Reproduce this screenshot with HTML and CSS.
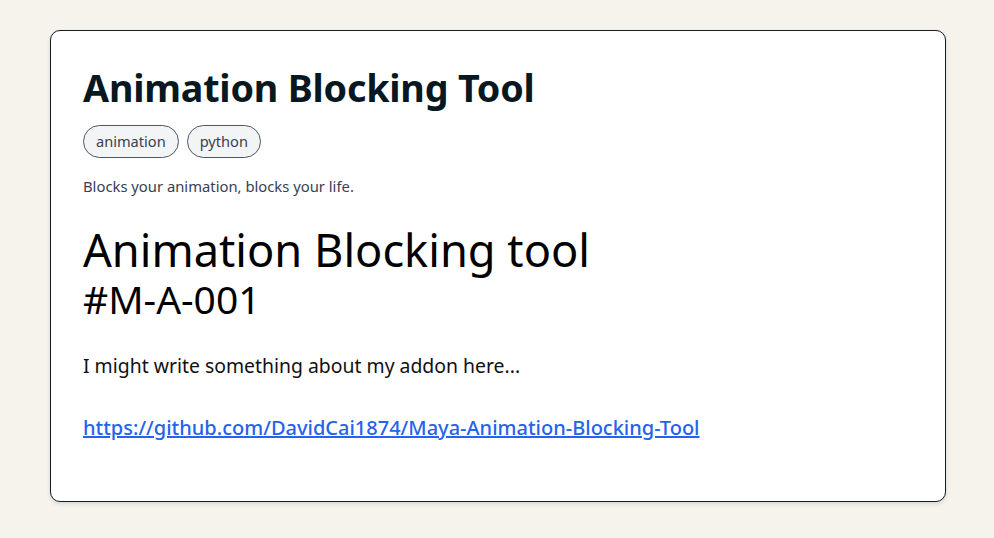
FILE: index.html
```html
<!DOCTYPE html>
<html lang="en">
<head>
<meta charset="utf-8">
<title>Animation Blocking Tool</title>
<link rel="stylesheet" href="styles.css">
</head>
<body>
<main class="page">
  <article class="card">
    <h1 class="title">Animation Blocking Tool</h1>
    <ul class="tags">
      <li class="tag">animation</li>
      <li class="tag">python</li>
    </ul>
    <p class="desc">Blocks your animation, blocks your life.</p>
    <div class="content">
      <h2 class="heading">Animation Blocking tool<span class="code">#M-A-001</span></h2>
      <p class="text">I might write something about my addon here...</p>
      <p class="text text-link"><a class="link" href="#">https://github.com/DavidCai1874/Maya-Animation-Blocking-Tool</a></p>
    </div>
  </article>
</main>
</body>
</html>
```
FILE: styles.css
```css
* { box-sizing: border-box; }
html, body { margin: 0; padding: 0; }
body {
  background: #f6f3ec;
  font-family: "Noto Sans", "Open Sans", sans-serif;
  color: #0b1a20;
}
.page {
  padding: 30px 48px 36px 50px;
}
.card {
  background: #ffffff;
  border: 1px solid #0f1d24;
  border-radius: 10px;
  box-shadow: 0 2px 4px rgba(0,0,0,0.12);
  padding: 32px 32px 48px 32px;
  min-height: 472px;
}
.title {
  margin: 0;
  font-size: 37.7px;
  line-height: 50px;
  font-weight: 700;
  letter-spacing: -0.2px;
  color: #071820;
}
.tags {
  list-style: none;
  margin: 12px 0 0;
  padding: 0;
  display: flex;
  gap: 8px;
}
.tag {
  border: 1px solid #4b5563;
  background: #f3f4f6;
  border-radius: 999px;
  padding: 0 12px;
  height: 33px;
  line-height: 31px;
  font-size: 14.6px;
  color: #374151;
}
.desc {
  margin: 18px 0 0;
  font-size: 14.8px;
  line-height: 20px;
  color: #374151;
}
.content { margin-top: 28px; }
.heading {
  margin: 0;
  font-size: 45.2px;
  line-height: 52px;
  font-weight: 400;
  color: #000;
}
.code {
  display: block;
  margin-top: 3px;
  font-size: 39px;
  line-height: 40px;
}
.text {
  margin: 33px 0 0;
  font-size: 19.4px;
  line-height: 28px;
  color: #111;
}
.text-link { margin-top: 34px; font-size: 20px; }
.link {
  color: #2563eb;
  font-weight: 500;
  text-decoration: underline;
}
```
